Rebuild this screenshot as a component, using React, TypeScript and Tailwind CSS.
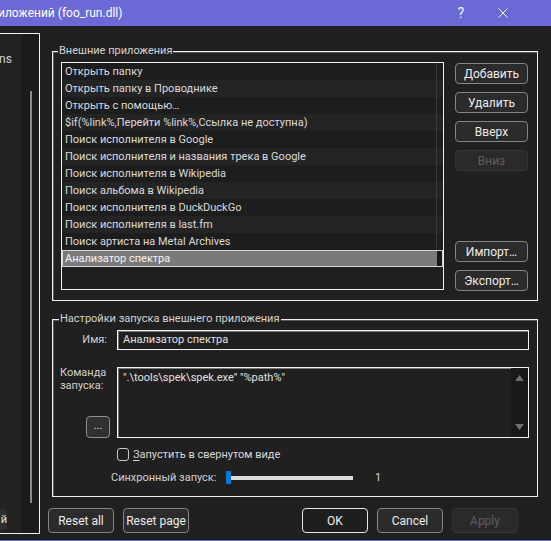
import React from "react";

const items = [
  "Открыть папку",
  "Открыть папку в Проводнике",
  "Открыть с помощью…",
  "$if(%link%,Перейти %link%,Ссылка не доступна)",
  "Поиск исполнителя в Google",
  "Поиск исполнителя и названия трека в Google",
  "Поиск исполнителя в Wikipedia",
  "Поиск альбома в Wikipedia",
  "Поиск исполнителя в DuckDuckGo",
  "Поиск исполнителя в last.fm",
  "Поиск артиста на Metal Archives",
];

function Btn({
  children,
  disabled,
  primary,
  className = "",
}: {
  children: React.ReactNode;
  disabled?: boolean;
  primary?: boolean;
  className?: string;
}) {
  const base =
    "flex items-center justify-center rounded-[4px] border leading-none whitespace-nowrap ";
  const look = disabled
    ? "bg-[#2a2a2a] border-[#353535] text-[#5e5e5e]"
    : primary
    ? "bg-[#1e1e1e] border-[#e8e8e8] text-[#f0f0f0]"
    : "bg-[#2b2b2b] border-[#858585] text-[#ececec]";
  return <div className={base + look + " " + className}>{children}</div>;
}

export default function App() {
  return (
    <div
      className="w-[551px] h-[541px] bg-[#202020] flex flex-col overflow-hidden text-[11px] text-[#d8d8d8]"
      style={{ fontFamily: 'Roboto, "Noto Sans", sans-serif' }}
    >
      {/* title bar */}
      <div className="h-[26px] shrink-0 bg-[#6b69d6] flex items-center text-white">
        <span className="ml-[-2px] text-[12px] leading-none whitespace-nowrap">иложений (foo_run.dll)</span>
        <span className="ml-auto mr-[34px] text-[14px] leading-none text-[#f4f4f4]">?</span>
        <svg width="10" height="10" viewBox="0 0 10 10" className="mr-[43px]">
          <path d="M0.5 0.5 L9.5 9.5 M9.5 0.5 L0.5 9.5" stroke="#f4f4f4" strokeWidth="1" fill="none" />
        </svg>
      </div>

      {/* main */}
      <div className="flex h-[514px] shrink-0">
        {/* left clipped panel */}
        <div className="mt-[7px] h-[501px] w-[40px] border-t border-b border-r border-[#f2f2f2] flex">
          <div className="w-[22px] bg-[#222222] flex flex-col overflow-hidden">
            <span className="mt-[17px] ml-[-1px] text-[12px] leading-[16px] text-[#cfcfcf]">ns</span>
            <div className="mt-auto mb-[3px] h-[21px] w-[7px] bg-[#2e2e2e] rounded-r-[3px] overflow-hidden flex items-center justify-end">
              <span className="text-[11px] leading-none text-[#e0e0e0]">й</span>
            </div>
          </div>
          <div className="w-[17px] bg-[#1a1a1a] pt-[57px]">
            <div className="ml-[8px] w-[2px] h-[412px] bg-[#8c8c8c]" />
          </div>
        </div>

        {/* right column */}
        <div className="pl-[8px] flex flex-col">
          <div className="ml-[4px] w-[486px] flex flex-col">
            {/* group 1 */}
            <div className="relative mt-[25px] h-[250px] border border-[#efefef] shadow-[inset_1px_1px_0_#5a5a5a] pt-[10px] pl-[8px] pr-[9px] pb-[10px] flex gap-[11px]">
              <span className="absolute top-[-9px] left-[5px] bg-[#202020] px-[1px] text-[11px] leading-[16px] text-[#d4d4d4] whitespace-nowrap">
                Внешние приложения
              </span>
              {/* list */}
              <div className="w-[383px] h-[228px] border border-[#efefef] bg-[#202020] flex flex-col">
                {items.map((t, i) => (
                  <div
                    key={i}
                    className={
                      "h-[17px] shrink-0 flex " +
                      (i % 2 === 0 ? "bg-[#1d1d1d]" : "bg-[#242424]")
                    }
                  >
                    <div className="w-[375px] border-r border-[#3a3a3a] pl-[3px] leading-[18px] whitespace-nowrap overflow-hidden text-[#dadada]">
                      {t}
                    </div>
                  </div>
                ))}
                <div className="h-[17px] shrink-0 flex border border-[#d4d4d4]">
                  <div className="w-[374px] bg-[#7a7a7a] pl-[2px] leading-[16px] text-[#f4f4f4] whitespace-nowrap">
                    Анализатор спектра
                  </div>
                  <div className="flex-1 bg-[#1a1a1a]" />
                </div>
              </div>
              {/* buttons */}
              <div className="w-[73px] flex flex-col justify-between pt-[1px] text-[12px]">
                <div className="flex flex-col gap-[8px]">
                  <Btn className="h-[21px]">Добавить</Btn>
                  <Btn className="h-[21px]">Удалить</Btn>
                  <Btn className="h-[21px]">Вверх</Btn>
                  <Btn className="h-[21px]" disabled>
                    Вниз
                  </Btn>
                </div>
                <div className="flex flex-col gap-[8px] mb-[-1px]">
                  <Btn className="h-[21px]">Импорт…</Btn>
                  <Btn className="h-[21px]">Экспорт…</Btn>
                </div>
              </div>
            </div>

            {/* group 2 */}
            <div className="relative mt-[18px] h-[178px] border border-[#efefef] shadow-[inset_1px_1px_0_#5a5a5a] pt-[10px] flex flex-col">
              <span className="absolute top-[-9px] left-[6px] bg-[#202020] px-[1px] text-[11px] leading-[16px] text-[#d4d4d4] whitespace-nowrap">
                Настройки запуска внешнего приложения
              </span>
              <div className="flex">
                <div className="w-[64px] pr-[10px] text-right leading-[20px] text-[#d0d0d0]">Имя:</div>
                <div className="w-[412px] h-[20px] border border-[#f2f2f2] shadow-[inset_1px_1px_0_#777] pl-[5px] leading-[18px] text-[#e0e0e0] whitespace-nowrap">
                  Анализатор спектра
                </div>
              </div>
              <div className="flex mt-[17px]">
                <div className="w-[64px] h-[71px] flex flex-col justify-between">
                  <div className="pl-[7px] mt-[-1px] leading-[13px] text-[#d0d0d0]">
                    Команда
                    <br />
                    запуска:
                  </div>
                  <Btn className="ml-[33px] w-[24px] h-[22px] !bg-[#303030] !border-[#8f8f8f] text-[11px] pb-[3px]">
                    ...
                  </Btn>
                </div>
                <div className="w-[412px] h-[71px] border border-[#f2f2f2] shadow-[inset_1px_1px_0_#777] flex">
                  <div className="flex-1 pl-[5px] pt-[1px] leading-[17px] text-[#e0e0e0] whitespace-nowrap">
                    ".\tools\spek\spek.exe" "%path%"
                  </div>
                  <div className="w-[17px] bg-[#191919] flex flex-col items-center justify-between py-[7px]">
                    <svg width="9" height="6" viewBox="0 0 9 6">
                      <path d="M4.5 0 L9 6 L0 6 Z" fill="#6f6f6f" />
                    </svg>
                    <svg width="9" height="6" viewBox="0 0 9 6">
                      <path d="M0 0 L9 0 L4.5 6 Z" fill="#6f6f6f" />
                    </svg>
                  </div>
                </div>
              </div>
              <div className="flex items-center mt-[10px] ml-[64px] h-[13px]">
                <div className="w-[12px] h-[13px] rounded-[3px] border border-[#c8c8c8] bg-[#1f1f1f]" />
                <span className="ml-[4px] leading-[13px] text-[#d8d8d8] whitespace-nowrap">
                  <span className="underline underline-offset-2">З</span>апустить в свернутом виде
                </span>
              </div>
              <div className="flex items-center mt-[10px] ml-[58px] h-[13px]">
                <span className="w-[115px] leading-[13px] text-[#d0d0d0] whitespace-nowrap">Синхронный запуск:</span>
                <div className="w-[5px] h-[13px] bg-[#0a78d6]" />
                <div className="w-[122px] h-[4px] bg-[#dcdcdc]" />
                <span className="ml-[22px] leading-[13px] text-[#d8d8d8]">1</span>
              </div>
            </div>
          </div>

          {/* bottom buttons */}
          <div className="mt-[11px] w-[470px] flex justify-between text-[12px]">
            <div className="flex gap-[9px]">
              <Btn className="w-[66px] h-[25px]">Reset all</Btn>
              <Btn className="w-[66px] h-[25px]">Reset page</Btn>
            </div>
            <div className="flex gap-[9px]">
              <Btn className="w-[66px] h-[25px]" primary>
                OK
              </Btn>
              <Btn className="w-[66px] h-[25px]">Cancel</Btn>
              <Btn className="w-[66px] h-[25px]" disabled>
                Apply
              </Btn>
            </div>
          </div>
        </div>
      </div>
      <div className="h-[1px] shrink-0 bg-[#6b69d6]" />
    </div>
  );
}
